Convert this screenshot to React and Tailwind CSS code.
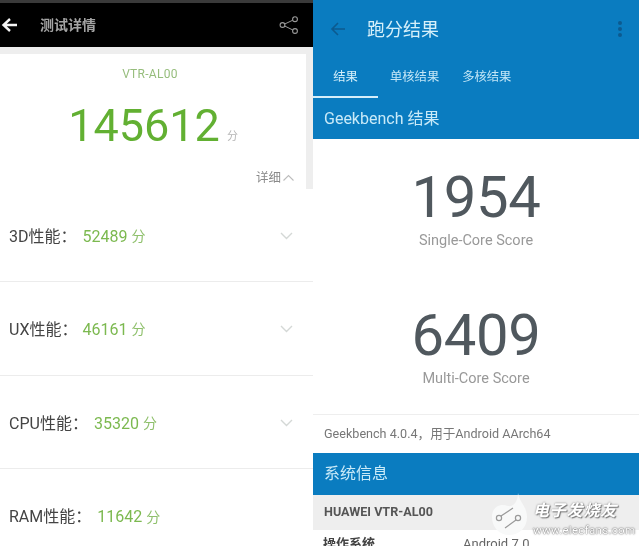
import React from "react";

function Row({ label, score, h, gap, pad, border = true }) {
  return (
    <div className={`${h} ${pad} flex items-center pl-[9px] pr-5 shrink-0 bg-white ${border ? "border-b border-[#ececec]" : ""}`}>
      <span className="text-[16px] text-[#444444] whitespace-nowrap">{label}：</span>
      <span className={`text-[16px] text-[#7cb950] whitespace-nowrap ${gap}`}>{score}</span>
      <span className="text-[14px] text-[#8fc06c] ml-[4px]">分</span>
      <span className="flex-1" />
      {border && (
        <svg width="13" height="8" viewBox="0 0 13 8" fill="none" className="-mt-[2px]">
          <path d="M1 1 L6.5 6.5 L12 1" stroke="#d4d8d6" strokeWidth="1.4" />
        </svg>
      )}
    </div>
  );
}

function Left() {
  return (
    <div className="w-[313px] shrink-0 flex flex-col bg-white">
      <div className="h-[3px] bg-[#3a3a3a]" />
      <div className="h-[44px] bg-black flex items-center relative">
        <svg width="18" height="18" viewBox="0 0 18 18" fill="none" className="ml-[1px]">
          <path d="M16 9 H3 M9 3 L2.5 9 L9 15" stroke="#f4f4f4" strokeWidth="2.4" />
        </svg>
        <span className="ml-[21px] text-[14px] font-bold text-[#a4a4a4]">测试详情</span>
        <span className="flex-1" />
        <svg width="20" height="18" viewBox="0 0 20 18" fill="none" className="mr-[14px]">
          <circle cx="3.5" cy="9" r="2.4" stroke="#9a9a9a" strokeWidth="1.1" />
          <circle cx="16" cy="3.2" r="2.4" stroke="#9a9a9a" strokeWidth="1.1" />
          <circle cx="16" cy="15" r="2.4" stroke="#9a9a9a" strokeWidth="1.1" />
          <path d="M5.7 8 L13.8 4.2 M5.7 10 L13.8 14" stroke="#9a9a9a" strokeWidth="1" />
        </svg>
      </div>
      <div className="h-[142px] shrink-0 bg-[#eeeeee] pt-[7px] pr-[7px]">
        <div className="h-[135px] bg-white flex flex-col items-center relative">
          <div className="mt-[13px] -ml-[6px] text-[12px] leading-[14px] text-[#96bd7c] tracking-[0.3px]">VTR-AL00</div>
          <div className="flex items-end mt-[21px]">
            <span className="text-[45px] leading-[48px] text-[#62b032]">145612</span>
            <span className="text-[11px] leading-[14px] text-[#b5b5b5] ml-[7px] mb-[6px]">分</span>
          </div>
          <div className="absolute right-[11px] bottom-[3px] flex items-center">
            <span className="text-[12.5px] leading-[16px] text-[#8a8a8a]">详细</span>
            <svg width="13" height="8" viewBox="0 0 13 8" fill="none" className="ml-[1px]">
              <path d="M1.5 6.5 L6.5 1.5 L11.5 6.5" stroke="#bcbcbc" strokeWidth="1.1" />
            </svg>
          </div>
        </div>
      </div>
      <Row label="3D性能" score="52489" h="h-[93px]" pad="pt-[3px]" gap="ml-[6px]" />
      <Row label="UX性能" score="46161" h="h-[94px]" pad="pt-[2px]" gap="ml-[5px]" />
      <Row label="CPU性能" score="35320" h="h-[93px]" pad="pt-[3px]" gap="ml-[6px]" />
      <Row label="RAM性能" score="11642" h="h-[77px]" pad="pt-[19px]" gap="ml-[6px]" border={false} />
    </div>
  );
}

function Right() {
  return (
    <div className="flex-1 flex flex-col bg-white min-w-0">
      <div className="bg-[#0a7cc0] h-[139px] shrink-0 flex flex-col">
        <div className="h-[58px] flex items-center shrink-0">
          <svg width="16" height="16" viewBox="0 0 16 16" fill="none" className="ml-[17px]">
            <path d="M15 8 H2 M8 2 L2 8 L8 14" stroke="#0c5a8f" strokeWidth="1.6" />
          </svg>
          <span className="ml-[21px] text-[18px] text-[#d6f0fa]">跑分结果</span>
          <span className="flex-1" />
          <span className="mr-[17px] flex flex-col gap-[2px]">
            <span className="w-[4px] h-[4px] rounded-full bg-[#0c5a8f]" />
            <span className="w-[4px] h-[4px] rounded-full bg-[#0c5a8f]" />
            <span className="w-[4px] h-[4px] rounded-full bg-[#0c5a8f]" />
          </span>
        </div>
        <div className="h-[40px] shrink-0 flex text-[12.3px] text-[#c3e6f6] relative">
          <div className="w-[65px] h-[40px] border-b-[2px] border-[#d5eefa] flex justify-center pt-[10px] text-[#d6f0fa]">结果</div>
          <div className="ml-[12px] pt-[10px]">单核结果</div>
          <div className="ml-[23px] pt-[10px]">多核结果</div>
        </div>
        <div className="h-[41px] shrink-0 flex items-center pl-[11px] text-[16px] text-[#c9eaf8]">Geekbench 结果</div>
      </div>
      <div className="h-[276px] shrink-0 flex flex-col items-center border-b border-[#eeeeee]">
        <div className="mt-[28px] text-[58px] leading-[60px] text-[#50585e] tracking-[-0.3px]">1954</div>
        <div className="mt-[5px] text-[14.5px] leading-[18px] text-[#999999]">Single-Core Score</div>
        <div className="mt-[55px] text-[58px] leading-[60px] text-[#50585e] tracking-[-0.3px]">6409</div>
        <div className="mt-[5px] text-[14.5px] leading-[18px] text-[#999999]">Multi-Core Score</div>
      </div>
      <div className="h-[38px] shrink-0 flex items-center pl-[11px] text-[12.6px] text-[#777777] whitespace-nowrap">Geekbench 4.0.4，用于Android AArch64</div>
      <div className="h-[42px] shrink-0 bg-[#0a7cc0] flex items-center pl-[11px] text-[16px] text-[#c9eaf8]">系统信息</div>
      <div className="h-[35px] shrink-0 bg-[#eeeeee] flex items-center pl-[11px] text-[12.6px] font-bold text-[#555555]">HUAWEI VTR-AL00</div>
      <div className="flex pl-[10px] text-[13px] leading-[14px] pt-[7px] overflow-hidden flex-1 min-h-0">
        <span className="w-[140px] font-bold text-[#444444]">操作系统</span>
        <span className="text-[#666666]">Android 7.0</span>
      </div>
    </div>
  );
}

function Watermark() {
  return (
    <div className="absolute left-[490px] top-[492px] flex items-start">
      <svg width="40" height="46" viewBox="0 0 40 46" fill="none" className="shrink-0">
        <path d="M28 1 C29 10 37 14 37 25 C37 36 29 43 19 43 C9 43 2 35 2 25 C2 15 10 11 18 14 C23 15 28 10 28 1 Z" fill="#f8f9f9" />
        <circle cx="9" cy="26" r="2.6" stroke="#9a9a9a" strokeWidth="1.2" />
        <circle cx="28" cy="26" r="2.6" stroke="#9a9a9a" strokeWidth="1.2" />
        <path d="M11 24 L23 16 M26 28 L15 36" stroke="#9a9a9a" strokeWidth="1.2" />
      </svg>
      <div className="ml-[3px] mt-[9px] flex flex-col">
        <span className="text-[16px] leading-[20px] font-bold italic text-white [text-shadow:0_0_2px_#777,1px_1px_1px_#777] tracking-[0.8px] whitespace-nowrap">电子发烧友</span>
        <span className="mt-[3px] text-[11.5px] leading-[13px] text-white [text-shadow:0_0_2px_#666,0_0_1px_#666] tracking-[0.3px] whitespace-nowrap">www.elecfans.com</span>
      </div>
    </div>
  );
}

export default function App() {
  return (
    <div
      className="w-[639px] h-[546px] overflow-hidden flex relative bg-white blur-[0.4px]"
      style={{ fontFamily: '"Roboto","Noto Sans CJK SC",sans-serif' }}
    >
      <Left />
      <Right />
      <Watermark />
    </div>
  );
}
